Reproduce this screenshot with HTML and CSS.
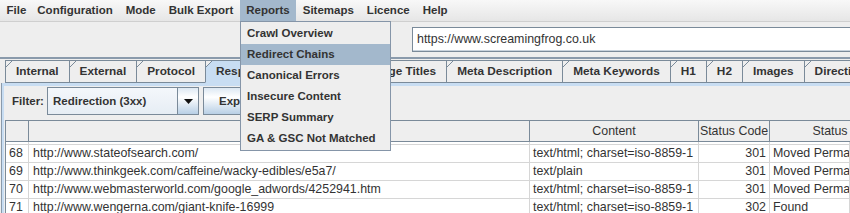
FILE: index.html
```html
<!DOCTYPE html>
<html>
<head>
<meta charset="utf-8">
<link rel="stylesheet" href="styles.css">
</head>
<body>
<div class="app">
  <div class="menubar">
    <span class="mi">File</span>
    <span class="mi">Configuration</span>
    <span class="mi">Mode</span>
    <span class="mi">Bulk Export</span>
    <span class="mi mi-active">Reports</span>
    <span class="mi">Sitemaps</span>
    <span class="mi">Licence</span>
    <span class="mi">Help</span>
  </div>
  <div class="toolbar">
    <div class="urlfield">https://www.screamingfrog.co.uk</div>
  </div>
  <div class="tabpane">
    <div class="tabs">
      <div class="tab">Internal</div>
      <div class="tab">External</div>
      <div class="tab">Protocol</div>
      <div class="tab tab-sel">Response Codes</div>
      <div class="tab">URI</div>
      <div class="tab">Page Titles</div>
      <div class="tab">Meta Description</div>
      <div class="tab">Meta Keywords</div>
      <div class="tab">H1</div>
      <div class="tab">H2</div>
      <div class="tab">Images</div>
      <div class="tab">Directives</div>
    </div>
    <div class="content">
      <div class="inner">
        <div class="filterrow">
          <span class="flabel">Filter:</span>
          <div class="combo">
            <div class="combo-text">Redirection (3xx)</div>
            <div class="combo-btn"><svg width="9" height="5" viewBox="0 0 9 5"><polygon points="0,0 9,0 4.5,5" fill="#111"/></svg></div>
          </div>
          <div class="btn">Export</div>
        </div>
        <div class="table">
          <div class="thead">
            <div class="th"></div>
            <div class="th">Address</div>
            <div class="th">Content</div>
            <div class="th">Status Code</div>
            <div class="th">Status</div>
            <div class="th th-last"></div>
          </div>
          <div class="tbody">
            <div class="tr tr-partial">
              <div class="td"></div><div class="td"></div><div class="td"></div><div class="td"></div><div class="td"></div>
            </div>
            <div class="tr">
              <div class="td num">68</div><div class="td url">http://www.stateofsearch.com/</div><div class="td">text/html; charset=iso-8859-1</div><div class="td code">301</div><div class="td">Moved Permanently</div>
            </div>
            <div class="tr">
              <div class="td num">69</div><div class="td url">http://www.thinkgeek.com/caffeine/wacky-edibles/e5a7/</div><div class="td">text/plain</div><div class="td code">301</div><div class="td">Moved Permanently</div>
            </div>
            <div class="tr">
              <div class="td num">70</div><div class="td url">http://www.webmasterworld.com/google_adwords/4252941.htm</div><div class="td">text/html; charset=iso-8859-1</div><div class="td code">301</div><div class="td">Moved Permanently</div>
            </div>
            <div class="tr">
              <div class="td num">71</div><div class="td url">http://www.wengerna.com/giant-knife-16999</div><div class="td">text/html; charset=iso-8859-1</div><div class="td code">302</div><div class="td">Found</div>
            </div>
          </div>
        </div>
      </div>
    </div>
  </div>
  <div class="dropdown">
    <div class="ddi">Crawl Overview</div>
    <div class="ddi ddi-sel">Redirect Chains</div>
    <div class="ddi">Canonical Errors</div>
    <div class="ddi">Insecure Content</div>
    <div class="ddi">SERP Summary</div>
    <div class="ddi">GA &amp; GSC Not Matched</div>
  </div>
</div>
</body>
</html>
```
FILE: styles.css
```css
* { box-sizing: border-box; }
html, body { margin: 0; padding: 0; }
body {
  background: #eeeeee;
  font-family: "Liberation Sans", Arial, sans-serif;
  color: #333333;
  width: 850px;
  height: 213px;
  overflow: hidden;
}
.app { position: relative; width: 850px; height: 213px; overflow: hidden; }

.menubar {
  display: flex;
  height: 22px;
  background: linear-gradient(#f8f8f8, #e6e6e6);
  border-bottom: 1px solid #cfcfcf;
  font-weight: bold;
  font-size: 11.5px;
}
.mi {
  padding: 0 6.5px;
  line-height: 21px;
  height: 21px;
  white-space: nowrap;
}
.mi:nth-child(2) { margin-left: -2px; }
.mi-active { background: #a3b8cc; }

.toolbar {
  height: 35px;
  padding: 5px 0 0 412px;
}
.urlfield {
  height: 25px;
  background: #ffffff;
  border: 1px solid #7a8a99;
  border-right: none;
  box-shadow: inset 0 -1px 0 #c9d3dd;
  font-size: 12.4px;
  line-height: 23px;
  padding-left: 4px;
  white-space: nowrap;
}

.tabpane {
  border-top: 2px solid #8a9aab;
  padding-top: 1px;
}
.tabs {
  display: flex;
  padding-left: 5px;
  height: 23px;
  white-space: nowrap;
}
.tab {
  position: relative;
  height: 23px;
  border: 1px solid #7a8a99;
  padding: 0 10px;
  margin-right: -1px;
  font-weight: bold;
  font-size: 11.8px;
  line-height: 21px;
  background: #eeeeee;
  flex: none;
}
.tab::before {
  content: "";
  position: absolute;
  left: 0;
  top: 0;
  width: 6px;
  height: 6px;
  background: linear-gradient(to bottom right, #eeeeee 0 calc(50% - 0.6px), #7a8a99 calc(50% - 0.6px) calc(50% + 0.6px), transparent calc(50% + 0.6px));
}
.tab-sel { background: #c8ddf2; border-bottom-color: #c8ddf2; z-index: 1; }

.content {
  margin-left: 1px;
  border-left: 1px solid #8a9aab;
}
.inner {
  border-left: 2px solid #c8ddf2;
  border-top: 3px solid #c8ddf2;
}
.filterrow {
  display: flex;
  align-items: center;
  height: 34px;
  padding: 0 0 4px 8px;
  font-weight: bold;
  font-size: 11.5px;
}
.flabel { width: 35px; flex: none; }
.combo {
  display: flex;
  width: 152px;
  height: 28px;
  border: 1px solid #7a8a99;
  flex: none;
}
.combo-text {
  flex: 1;
  background: linear-gradient(#f4f7fb, #e6edf4);
  line-height: 26px;
  padding-left: 5px;
  white-space: nowrap;
}
.combo-btn {
  width: 21px;
  border-left: 1px solid #7a8a99;
  background: linear-gradient(#dde8f3, #ffffff 35%, #b8cfe5);
  display: flex;
  align-items: center;
  justify-content: center;
}
.btn {
  margin-left: 4px;
  height: 28px;
  width: 70px;
  border: 1px solid #7a8a99;
  background: linear-gradient(#dde8f3, #ffffff 35%, #b8cfe5);
  padding-left: 15px;
  line-height: 26px;
}

.table {
  margin-left: 1px;
  border-top: 1px solid #7a8a99;
  border-left: 1px solid #7a8a99;
  font-size: 12.4px;
}
.thead {
  display: grid;
  grid-template-columns: 23px 501px 169px 71px 121px 1fr;
  height: 21px;
  border-bottom: 1px solid #7a8a99;
  background: #eeeeee;
}
.th {
  border-right: 1px solid #7a8a99;
  text-align: center;
  line-height: 20px;
  white-space: nowrap;
  overflow: hidden;
}
.th-last { border-right: none; }
.tbody { background: #ffffff; }
.tr {
  display: grid;
  grid-template-columns: 23px 501px 169px 71px 1fr;
  height: 18px;
  border-bottom: 1px solid #d6d6d6;
}
.tr-partial { height: 3px; }
.td {
  border-right: 1px solid #d6d6d6;
  line-height: 17px;
  padding-left: 3px;
  white-space: nowrap;
  overflow: hidden;
}
.td.num { padding-left: 3px; }
.td.url { padding-left: 4px; }
.td.code { text-align: right; padding-right: 3px; padding-left: 0; }

.dropdown {
  position: absolute;
  left: 240px;
  top: 21px;
  width: 151px;
  background: #eeeeee;
  border: 1px solid #8595a8;
  padding: 1px 0 1px;
  font-weight: bold;
  font-size: 11.5px;
  z-index: 5;
}
.ddi {
  height: 21px;
  line-height: 21px;
  padding-left: 6px;
  white-space: nowrap;
}
.ddi-sel { background: #a3b8cc; }
```
